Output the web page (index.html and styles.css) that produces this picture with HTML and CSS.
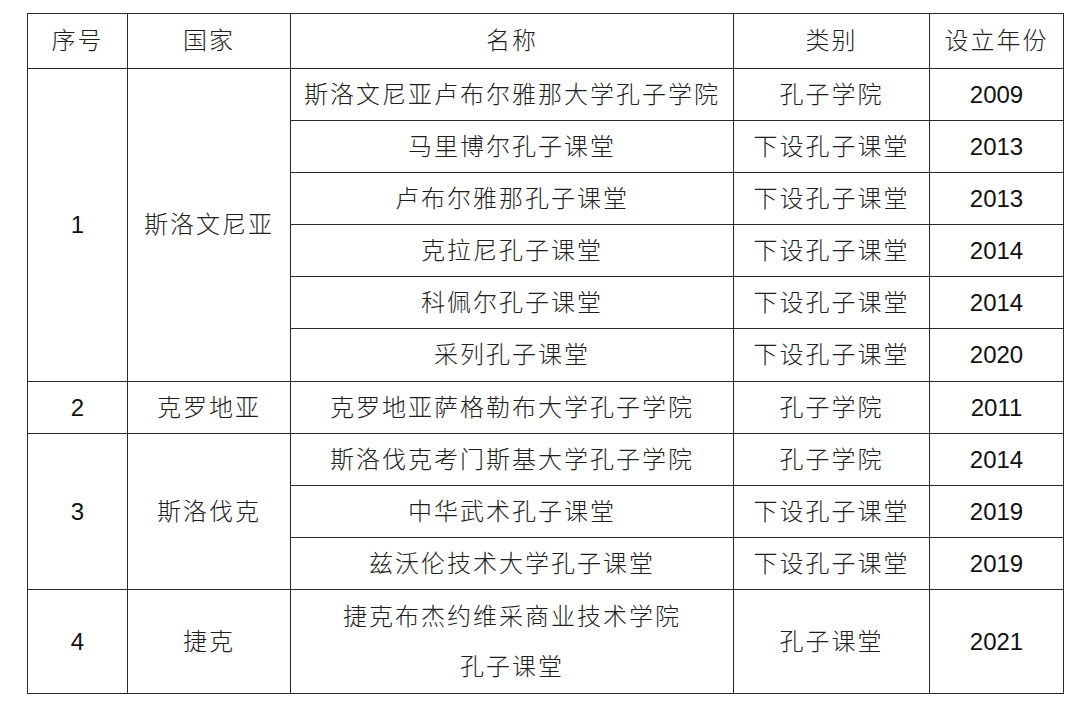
FILE: index.html
```html
<!DOCTYPE html>
<html lang="zh">
<head>
<meta charset="utf-8">
<link rel="stylesheet" href="styles.css">
</head>
<body>
<table class="tbl">
  <colgroup>
    <col class="c1"><col class="c2"><col class="c3"><col class="c4"><col class="c5">
  </colgroup>
  <tr class="head">
    <th>序号</th><th>国家</th><th>名称</th><th>类别</th><th>设立年份</th>
  </tr>
  <tr class="row">
    <td class="num" rowspan="6">1</td><td rowspan="6">斯洛文尼亚</td>
    <td>斯洛文尼亚卢布尔雅那大学孔子学院</td><td>孔子学院</td><td class="num">2009</td>
  </tr>
  <tr class="row"><td>马里博尔孔子课堂</td><td>下设孔子课堂</td><td class="num">2013</td></tr>
  <tr class="row"><td>卢布尔雅那孔子课堂</td><td>下设孔子课堂</td><td class="num">2013</td></tr>
  <tr class="row"><td>克拉尼孔子课堂</td><td>下设孔子课堂</td><td class="num">2014</td></tr>
  <tr class="row"><td>科佩尔孔子课堂</td><td>下设孔子课堂</td><td class="num">2014</td></tr>
  <tr class="row r53"><td>采列孔子课堂</td><td>下设孔子课堂</td><td class="num">2020</td></tr>
  <tr class="row">
    <td class="num">2</td><td>克罗地亚</td><td>克罗地亚萨格勒布大学孔子学院</td><td>孔子学院</td><td class="num">2011</td>
  </tr>
  <tr class="row">
    <td class="num" rowspan="3">3</td><td rowspan="3">斯洛伐克</td>
    <td>斯洛伐克考门斯基大学孔子学院</td><td>孔子学院</td><td class="num">2014</td>
  </tr>
  <tr class="row"><td>中华武术孔子课堂</td><td>下设孔子课堂</td><td class="num">2019</td></tr>
  <tr class="row"><td>兹沃伦技术大学孔子课堂</td><td>下设孔子课堂</td><td class="num">2019</td></tr>
  <tr class="last">
    <td class="num">4</td><td>捷克</td>
    <td class="two">捷克布杰约维采商业技术学院<br>孔子课堂</td><td>孔子课堂</td><td class="num">2021</td>
  </tr>
</table>
</body>
</html>
```

FILE: styles.css
```css
html, body {
  margin: 0;
  padding: 0;
  background: #fff;
}
body {
  padding: 13px 0 0 27px;
}
.tbl {
  border-collapse: collapse;
  table-layout: fixed;
  width: 1036px;
  font-family: "Liberation Sans", "Noto Sans CJK SC", sans-serif;
  font-size: 24px;
  font-weight: 300;
  color: #1e1e1e;
}
.c1 { width: 100px; }
.c2 { width: 163px; }
.c3 { width: 443px; }
.c4 { width: 196px; }
.c5 { width: 134px; }
.tbl th, .tbl td {
  border: 1px solid #2a2a2a;
  text-align: center;
  vertical-align: middle;
  padding: 0;
  font-weight: 300;
  letter-spacing: 2px;
  line-height: 30px;
}
.tbl td.num {
  letter-spacing: 0;
  font-weight: 400;
  color: #111;
}
.head { height: 55px; }
.row { height: 52px; }
.r53 { height: 53px; }
.last { height: 104px; }
.tbl td.two {
  line-height: 50px;
}
```
